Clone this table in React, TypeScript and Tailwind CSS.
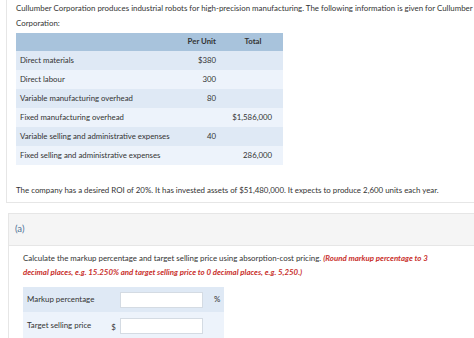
export default function App() {
  const rows = [
    { label: "Direct materials", unit: "$380", total: "" },
    { label: "Direct labour", unit: "300", total: "" },
    { label: "Variable manufacturing overhead", unit: "80", total: "" },
    { label: "Fixed manufacturing overhead", unit: "", total: "$1,586,000" },
    { label: "Variable selling and administrative expenses", unit: "40", total: "" },
    { label: "Fixed selling and administrative expenses", unit: "", total: "286,000" },
  ];

  return (
    <div className="w-[474px] h-[338px] overflow-hidden bg-white text-[#333] font-['Lato','Liberation_Sans',sans-serif] text-[7.9px]">
      {/* Question card */}
      <div className="ml-[6px] border-l border-b border-[#e6e6e6] pl-[9px] pt-[1px] h-[203px]">
        <p className="leading-[15px]">
          Cullumber Corporation produces industrial robots for high-precision manufacturing. The following information is given for Cullumber
          Corporation:
        </p>
        <table className="mt-[2px] w-[267px] table-fixed border-collapse text-[7.8px] whitespace-nowrap">
          <colgroup>
            <col className="w-[165px]" />
            <col className="w-[42px]" />
            <col className="w-[60px]" />
          </colgroup>
          <thead>
            <tr className="bg-[#a8c3dc] h-[18px]">
              <th></th>
              <th className="text-right pr-[7px] font-bold">Per Unit</th>
              <th className="text-center font-bold">Total</th>
            </tr>
          </thead>
          <tbody>
            {rows.map((r, i) => (
              <tr key={r.label} className={`h-[19px] ${i % 2 === 0 ? "bg-[#dfe9f5]" : "bg-[#edf3fb]"}`}>
                <td className="pl-[4px]">{r.label}</td>
                <td className="text-right pr-[7px]">{r.unit}</td>
                <td className="text-right pr-[11px]">{r.total}</td>
              </tr>
            ))}
          </tbody>
        </table>
        <p className="mt-[18px] leading-[15px]">
          The company has a desired ROI of 20%. It has invested assets of $51,480,000. It expects to produce 2,600 units each year.
        </p>
      </div>

      {/* Part (a) */}
      <div className="mt-[10px] ml-[8px] border-l border-[#e6e6e6]">
        <div className="h-[33px] bg-[#f5f5f5] border-y border-[#e6e6e6] flex items-center pl-[6px] text-[9.5px] text-[#4f7397]">
          (a)
        </div>
        <div className="pl-[14px] pr-[30px] pt-[5px]">
          <p className="leading-[14px]">
            Calculate the markup percentage and target selling price using absorption-cost pricing.{" "}
            <span className="font-bold italic text-[#c9302c]">
              (Round markup percentage to 3 decimal places, e.g. 15.250% and target selling price to 0 decimal places, e.g. 5,250.)
            </span>
          </p>
          <div className="mt-[8px] w-[201px]">
            <div className="h-[25px] bg-[#dfe9f5] flex items-center">
              <span className="w-[84px] pl-[4px] whitespace-nowrap">Markup percentage</span>
              <span className="w-[13px]"></span>
              <div className="w-[83px] h-[16px] bg-white border border-[#d4dbe3]"></div>
              <span className="ml-[11px]">%</span>
            </div>
            <div className="h-[27px] bg-[#edf3fb] flex items-center">
              <span className="w-[84px] pl-[4px] whitespace-nowrap">Target selling price</span>
              <span className="w-[13px] text-center pt-[4px]">$</span>
              <div className="w-[83px] h-[16px] bg-white border border-[#d4dbe3]"></div>
            </div>
          </div>
        </div>
      </div>
    </div>
  );
}
